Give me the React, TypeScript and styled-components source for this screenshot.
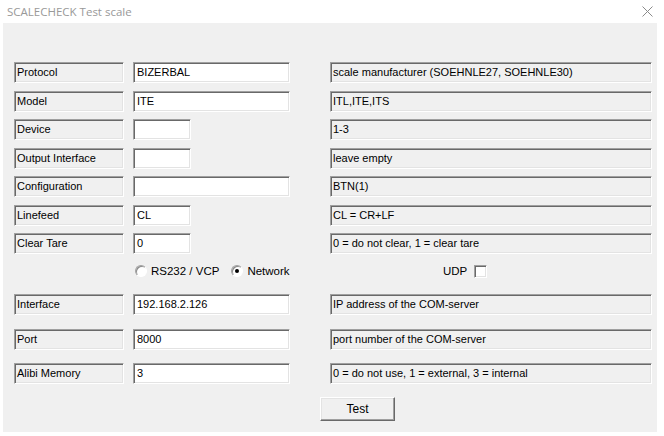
import { FC } from 'react'
import styled, { createGlobalStyle, css } from 'styled-components'

const GlobalStyle = createGlobalStyle`
  html, body {
    margin: 0;
    padding: 0;
    background: #ffffff;
  }
  body {
    font-family: "Liberation Sans", Arial, sans-serif;
    font-size: 11px;
    color: #000;
  }
`

type Field = {
  label: string
  value: string
  hint: string
  narrow?: boolean
}

const topFields: Field[] = [
  { label: 'Protocol', value: 'BIZERBAL', hint: 'scale manufacturer (SOEHNLE27, SOEHNLE30)' },
  { label: 'Model', value: 'ITE', hint: 'ITL,ITE,ITS' },
  { label: 'Device', value: '', hint: '1-3', narrow: true },
  { label: 'Output Interface', value: '', hint: 'leave empty', narrow: true },
  { label: 'Configuration', value: '', hint: 'BTN(1)' },
  { label: 'Linefeed', value: 'CL', hint: 'CL = CR+LF', narrow: true },
  { label: 'Clear Tare', value: '0', hint: '0 = do not clear, 1 = clear tare', narrow: true },
]

const netFields: Field[] = [
  { label: 'Interface', value: '192.168.2.126', hint: 'IP address of the COM-server' },
  { label: 'Port', value: '8000', hint: 'port number of the COM-server' },
  { label: 'Alibi Memory', value: '3', hint: '0 = do not use, 1 = external, 3 = internal' },
]

const CloseIcon: FC = () => (
  <svg width="11" height="11" viewBox="0 0 11 11">
    <path d="M0.5 0.5 L10.5 10.5 M10.5 0.5 L0.5 10.5" stroke="#8a8a8a" strokeWidth="1" fill="none" />
  </svg>
)

const FieldRow: FC<{ field: Field }> = ({ field }) => (
  <StyledRow>
    <StyledLabelBox>{field.label}</StyledLabelBox>
    <StyledEditBox $narrow={field.narrow}>{field.value}</StyledEditBox>
    <StyledHintBox>{field.hint}</StyledHintBox>
  </StyledRow>
)

export default function App() {
  return (
    <>
      <GlobalStyle />
      <StyledWindow>
        <StyledTitleBar>
          <StyledTitle>SCALECHECK Test scale</StyledTitle>
          <StyledClose>
            <CloseIcon />
          </StyledClose>
        </StyledTitleBar>

        <StyledClient>
          <StyledFieldList $gap={7.5}>
            {topFields.map((f) => (
              <FieldRow key={f.label} field={f} />
            ))}
          </StyledFieldList>

          <StyledOptionsRow>
            <span />
            <StyledRadioGroup>
              <StyledOption>
                <StyledRadio />
                RS232 / VCP
              </StyledOption>
              <StyledOption>
                <StyledRadio $checked />
                Network
              </StyledOption>
            </StyledRadioGroup>
            <StyledUdp>
              UDP
              <StyledCheckbox />
            </StyledUdp>
          </StyledOptionsRow>

          <StyledFieldList $gap={13.5} $top={14}>
            {netFields.map((f) => (
              <FieldRow key={f.label} field={f} />
            ))}
          </StyledFieldList>

          <StyledButtonRow>
            <StyledButton>Test</StyledButton>
          </StyledButtonRow>
        </StyledClient>
      </StyledWindow>
    </>
  )
}

const sunken = css`
  box-sizing: border-box;
  border: 1px solid;
  border-color: #a0a0a0 #ffffff #ffffff #a0a0a0;
  box-shadow: inset 1px 1px 0 #696969, inset -1px -1px 0 #e3e3e3;
`

const StyledWindow = styled.div`
  width: 664px;
  height: 436px;
  display: flex;
  flex-direction: column;
  background: #ffffff;
`

const StyledTitleBar = styled.div`
  height: 23px;
  display: flex;
  align-items: center;
  justify-content: space-between;
  padding: 0 11px 1px 7px;
  box-sizing: border-box;
`

const StyledTitle = styled.span`
  font-family: "Open Sans", "Noto Sans", sans-serif;
  font-size: 11.5px;
  color: #999999;
`

const StyledClose = styled.span`
  display: flex;
`

const StyledClient = styled.div`
  margin: 0 7px 4px 3px;
  flex: 1;
  background: #f0f0f0;
  padding: 39px 0 0 11px;
  display: flex;
  flex-direction: column;
`

const StyledFieldList = styled.div<{ $gap: number; $top?: number }>`
  display: flex;
  flex-direction: column;
  gap: ${(p) => p.$gap}px;
  margin-top: ${(p) => p.$top ?? 0}px;
`

const StyledRow = styled.div`
  display: grid;
  grid-template-columns: 110px 188px 322px;
  column-gap: 9px;
  height: 21px;
`

const StyledLabelBox = styled.div`
  ${sunken};
  background: #f0f0f0;
  padding: 2px 0 0 2px;
  line-height: 15px;
  white-space: nowrap;
`

const StyledEditBox = styled.div<{ $narrow?: boolean }>`
  ${sunken};
  background: #ffffff;
  width: ${(p) => (p.$narrow ? '58px' : '157px')};
  padding: 2px 0 0 3px;
  line-height: 15px;
`

const StyledHintBox = styled.div`
  ${sunken};
  background: #f0f0f0;
  padding: 2px 0 0 2px;
  line-height: 15px;
  white-space: nowrap;
`

const StyledOptionsRow = styled.div`
  display: grid;
  grid-template-columns: 110px 188px 322px;
  column-gap: 9px;
  height: 18px;
  margin-top: 8px;
  align-items: center;
  font-size: 11.5px;
`

const StyledRadioGroup = styled.div`
  display: flex;
  align-items: center;
  gap: 12px;
  padding-left: 2px;
  white-space: nowrap;
`

const StyledOption = styled.label`
  display: flex;
  align-items: center;
  gap: 4px;
`

const StyledRadio = styled.span<{ $checked?: boolean }>`
  box-sizing: border-box;
  width: 12px;
  height: 12px;
  border-radius: 50%;
  border: 1px solid;
  border-color: #a0a0a0 #ffffff #ffffff #a0a0a0;
  box-shadow: inset 1px 1px 0 #8a8a8a;
  background: #ffffff;
  position: relative;

  &::after {
    content: '';
    display: ${(p) => (p.$checked ? 'block' : 'none')};
    position: absolute;
    left: 3px;
    top: 3px;
    width: 4px;
    height: 4px;
    border-radius: 50%;
    background: #000000;
  }
`

const StyledUdp = styled.div`
  display: flex;
  align-items: center;
  gap: 7px;
  padding-left: 113px;
`

const StyledCheckbox = styled.span`
  ${sunken};
  width: 13px;
  height: 13px;
  background: #ffffff;
`

const StyledButtonRow = styled.div`
  display: flex;
  margin-top: 13px;
  padding-left: 306px;
`

const StyledButton = styled.button`
  box-sizing: border-box;
  width: 75px;
  height: 24px;
  font-family: "Liberation Sans", Arial, sans-serif;
  font-size: 12px;
  color: #000;
  background: #f0f0f0;
  border: 1px solid;
  border-color: #ffffff #696969 #696969 #ffffff;
  box-shadow: inset -1px -1px 0 #a0a0a0, inset 1px 1px 0 #e3e3e3;
  padding: 0;
`
